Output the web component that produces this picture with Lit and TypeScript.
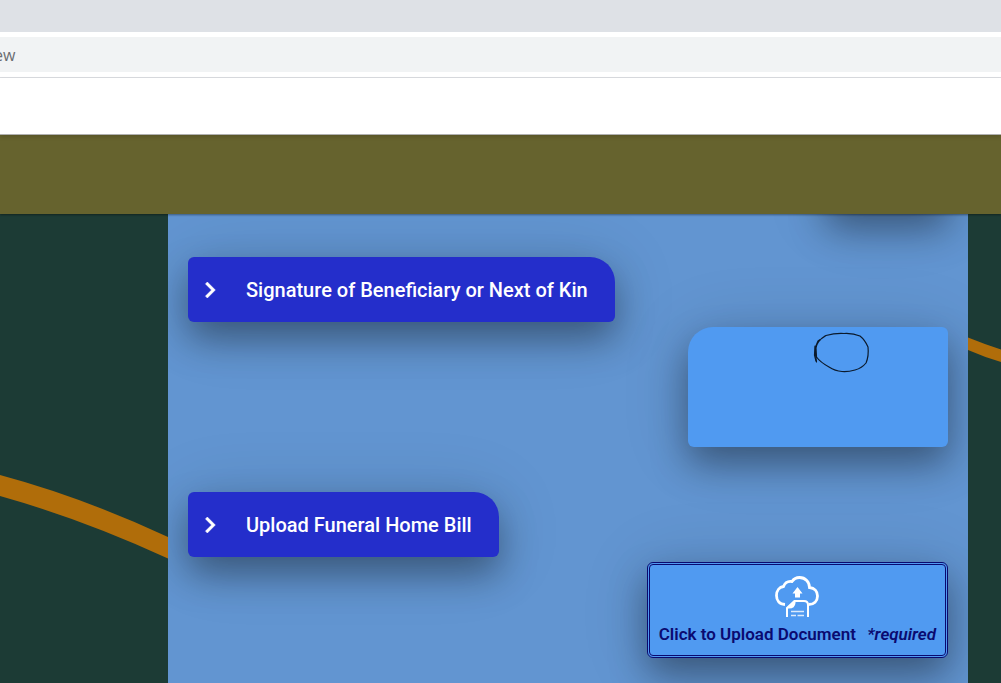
import { LitElement, html, css } from "lit";
import { customElement, property } from "lit/decorators.js";

@customElement("step-button")
class StepButton extends LitElement {
  @property() label = "";

  static styles = css`
    :host {
      display: block;
    }
    .step {
      display: flex;
      align-items: center;
      gap: 20px;
      height: 65px;
      padding: 0 27px 0 6px;
      border: 0;
      border-radius: 6px 25px 6px 6px;
      background: #242ecb;
      color: #fff;
      font: 500 20px/24px Roboto, sans-serif;
      white-space: nowrap;
      cursor: pointer;
      box-shadow: var(--raised);
    }
    .chevron {
      width: 32px;
      height: 32px;
      fill: currentColor;
      stroke: currentColor;
      stroke-width: 0.4;
    }
  `;

  render() {
    return html`<button class="step" aria-expanded="false">
      <svg class="chevron" viewBox="0 0 24 24" aria-hidden="true">
        <path d="M10 6 8.59 7.41 13.17 12l-4.58 4.59L10 18l6-6z" />
      </svg>
      <span>${this.label}</span>
    </button>`;
  }
}

@customElement("app-root")
class AppRoot extends LitElement {
  static styles = css`
    :host {
      display: flex;
      flex-direction: column;
      height: 100vh;
      overflow: hidden;
      font-family: Roboto, sans-serif;
      --raised: 0 17px 36px rgba(0, 0, 0, 0.36), 0 4px 70px rgba(0, 0, 0, 0.13);
    }
    * {
      box-sizing: border-box;
    }
    .tabs {
      flex: none;
      height: 32px;
      background: #dee1e6;
    }
    .toolbar {
      flex: none;
      padding: 5px 0;
      background: #fff;
      border-bottom: 1px solid #dadce0;
    }
    .address {
      display: block;
      width: 100%;
      height: 35px;
      padding: 1px 0 0;
      border: 0;
      outline: 0;
      background: #f1f3f4;
      color: #6a6d71;
      font: 16px/24px "Open Sans", sans-serif;
      text-indent: -6px;
    }
    .topbar {
      flex: none;
      position: relative;
      z-index: 3;
      height: 57px;
      background: #fff;
      border-bottom: 1px solid #b0b0b0;
      box-shadow: 0 2px 4px rgba(0, 0, 0, 0.15);
    }
    .banner {
      flex: none;
      position: relative;
      z-index: 2;
      height: 79px;
      background: #66632e;
      box-shadow: 0 1px 2px rgba(0, 0, 0, 0.4);
    }
    .page {
      flex: 1;
      min-height: 0;
      position: relative;
      display: grid;
      grid-template-columns: 168px minmax(0, 800px) 1fr;
      background: #1c3b35;
      overflow: hidden;
    }
    .swoosh {
      position: absolute;
      inset: 0;
      width: 100%;
      height: 100%;
      fill: #b06d0a;
    }
    .form {
      grid-column: 2;
      position: relative;
      display: flex;
      flex-direction: column;
      align-items: flex-start;
      gap: 5px;
      padding: 0 20px;
      background: #6295d1;
      overflow: hidden;
    }
    .answer {
      flex: none;
      align-self: flex-end;
      margin-bottom: 40px;
      border-radius: 25px 6px 6px 6px;
      background: #509af1;
      box-shadow: var(--raised);
    }
    .previous {
      width: 122px;
      height: 60px;
      margin-top: -62px;
    }
    .signature {
      width: 260px;
      height: 120px;
    }
    .ink {
      display: block;
      width: 100%;
      height: 100%;
      fill: none;
      stroke: #0b1a2c;
      stroke-width: 1.2;
      stroke-linecap: round;
      stroke-linejoin: round;
    }
    .upload {
      display: flex;
      flex-direction: column;
      align-items: center;
      height: 96px;
      padding: 10px 9px 0;
      border: 3px double #0a0a70;
      border-radius: 6px;
      color: #0a0a70;
      font: 600 17px/22px Roboto, sans-serif;
      white-space: nowrap;
      cursor: pointer;
    }
    .cloud {
      flex: none;
      width: 46px;
      height: 44px;
      margin-bottom: 4px;
      fill: none;
      stroke: #fff;
    }
    .required {
      margin-left: 7px;
    }
  `;

  render() {
    return html`
      <div class="tabs"></div>
      <div class="toolbar">
        <input class="address" type="text" aria-label="Address" .value=${"ew"} />
      </div>
      <header class="topbar"></header>
      <div class="banner"></div>
      <main class="page">
        <svg class="swoosh" viewBox="0 0 1001 469" preserveAspectRatio="xMidYMin slice" aria-hidden="true">
          <path d="M0 261Q82 283 168 323V344.500Q82 305 0 282Z" />
          <path d="M968 123.500Q984 130 1001 135.500V148Q984 143 968 136Z" />
        </svg>
        <section class="form">
          <div class="answer previous"></div>
          <step-button label="Signature of Beneficiary or Next of Kin"></step-button>
          <div class="answer signature">
            <svg class="ink" viewBox="0 0 260 120" role="img" aria-label="Signature">
              <path d="M128.500 35L127.500 28L127.500 20L130 14L138 8.500Q147 6 156 6.500Q165 6 172 9Q177 13 180 20Q181 29 178 36Q174 41 167 43Q160 45 154 44.500Q147 44 141 40Q132 35 128.500 30L128 21Q129 14 137 9" />
              <path d="M127 19L126.500 28L128 34" />
            </svg>
          </div>
          <step-button label="Upload Funeral Home Bill"></step-button>
          <button class="answer upload">
            <svg class="cloud" viewBox="0 0 46 44" aria-hidden="true">
              <path stroke-width="2.800" d="M11 29.500C5 29 2.500 25 2.500 20.500C2.500 15.500 5.500 12 9.500 11.500C11 7.500 14.500 6 18 6.500C20 3.500 23 2.500 25.500 2.500C31.500 2.500 35.500 7 35.500 12.500C40.500 13 43.500 16.500 43.500 21C43.500 26 40 29.500 34.500 29.500" />
              <path fill="#fff" stroke="none" d="M23.500 12L28.500 18.500H26V22.500H21V18.500H18.500Z" />
              <path stroke-width="2" d="M13 42V33L20.500 26H30Q34 26 34 30V42" />
              <path fill="#fff" stroke="none" d="M12 33.500L20 25.500H21.500V28Q21 33.500 15 33.500Z" />
              <path stroke-width="1.500" opacity=".8" d="M17 36.500H30M17 40.500H22M23.500 40.500H30" />
            </svg>
            <span>Click to Upload Document <em class="required">*required</em></span>
          </button>
        </section>
      </main>
    `;
  }
}
